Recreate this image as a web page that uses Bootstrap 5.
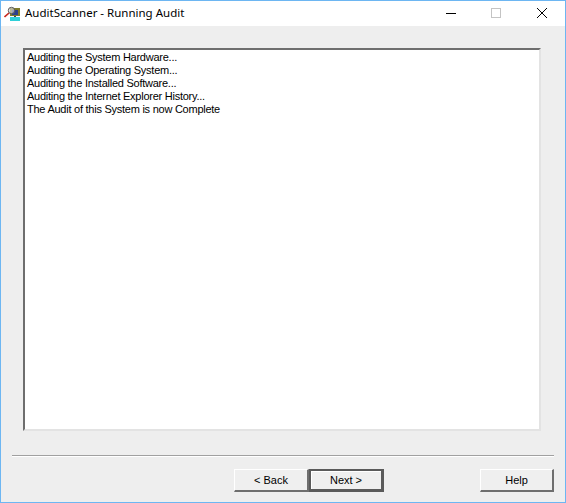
<!DOCTYPE html>
<html lang="en"><head><meta charset="utf-8"><title>AuditScanner</title>
<link href="https://cdn.jsdelivr.net/npm/bootstrap@5.3.0/dist/css/bootstrap.min.css" rel="stylesheet">
<style>
html,body{height:100%;margin:0;background:#eee}
.win-frame{width:566px;height:503px;border:1px solid #6db6f2;background:#eee;overflow:hidden}
.win-title{height:25px;background:#fff;font:11.5px/1 "Noto Sans","Open Sans",sans-serif;color:#000}
.win-icon{margin-left:3px;margin-right:5px;flex:none}
.win-name{margin-top:-1px}
.win-ctl{width:46px;height:24px;margin-bottom:1px}
.win-ctl-min{width:45px}
.win-body{padding:22px 24px 0 22px}
.log-box{height:383px;background:#fff;border-style:solid;border-width:2px;border-color:#6e6e6e #e3e3e3 #e3e3e3 #6e6e6e;padding:1px 2px;font:11px/12px "Liberation Sans",Arial,sans-serif;color:#000;letter-spacing:-.25px}
.log-line{height:13px;line-height:13px;white-space:nowrap}
.win-sep{margin:24px 11px 0 11px;height:2px;border-top:1px solid #a0a0a0;border-bottom:1px solid #fff}
.win-btns{margin:12px 11px 0 233px}
.win-btn{width:74px;height:23px;padding:0;border-radius:0;background:#efefef;font:11px/18px "Liberation Sans",Arial,sans-serif;color:#000;border-style:solid;border-width:1px 2px 2px 1px;border-color:#fff #6e6e6e #6e6e6e #fff}
.win-btn:hover{background:#efefef;color:#000;border-color:#fff #6e6e6e #6e6e6e #fff}
.win-btn-back{width:75px}
.win-btn-def{width:75px;border:2px solid #5a5a5a;border-right-width:3px;border-bottom-width:3px;box-shadow:inset 1px 1px 0 #fff}
.win-btn-def:hover{border-color:#5a5a5a}
</style></head>
<body>
<div class="win-frame d-flex flex-column">
  <div class="win-title d-flex align-items-center">
    <svg class="win-icon" width="16" height="16" viewBox="0 0 16 16" aria-hidden="true">
      <rect x="6" y="11" width="10" height="4" fill="#2fd0d8"/>
      <rect x="6" y="2" width="10" height="8" fill="#7d7a2a"/>
      <rect x="8" y="4" width="6" height="5" fill="#2b3f8f"/>
      <rect x="10" y="10" width="2" height="1" fill="#444"/>
      <circle cx="7.5" cy="4.5" r="3.2" fill="#d8d8d8" fill-opacity=".65" stroke="#555" stroke-width="1"/>
      <path d="M5 7 L.5 11" stroke="#c8281e" stroke-width="1.6"/>
    </svg>
    <span class="win-name flex-grow-1">AuditScanner - Running Audit</span>
    <div class="win-ctl win-ctl-min d-flex align-items-center justify-content-center">
      <svg width="10" height="10" viewBox="0 0 10 10"><path d="M0 5.5H10" stroke="#000" stroke-width="1"/></svg>
    </div>
    <div class="win-ctl d-flex align-items-center justify-content-center">
      <svg width="10" height="10" viewBox="0 0 10 10"><rect x=".5" y=".5" width="9" height="9" fill="none" stroke="#c4c4c4"/></svg>
    </div>
    <div class="win-ctl d-flex align-items-center justify-content-center">
      <svg width="10" height="10" viewBox="0 0 10 10"><path d="M0 0L10 10M10 0L0 10" stroke="#000" stroke-width="1"/></svg>
    </div>
  </div>
  <div class="win-body">
    <div class="log-box">
      <div class="log-line">Auditing the System Hardware...</div>
      <div class="log-line">Auditing the Operating System...</div>
      <div class="log-line">Auditing the Installed Software...</div>
      <div class="log-line">Auditing the Internet Explorer History...</div>
      <div class="log-line">The Audit of this System is now Complete</div>
    </div>
  </div>
  <div class="win-sep"></div>
  <div class="win-btns d-flex">
    <button type="button" class="btn win-btn win-btn-back">&lt; Back</button>
    <button type="button" class="btn win-btn win-btn-def">Next &gt;</button>
    <button type="button" class="btn win-btn ms-auto">Help</button>
  </div>
</div>
</body></html>
